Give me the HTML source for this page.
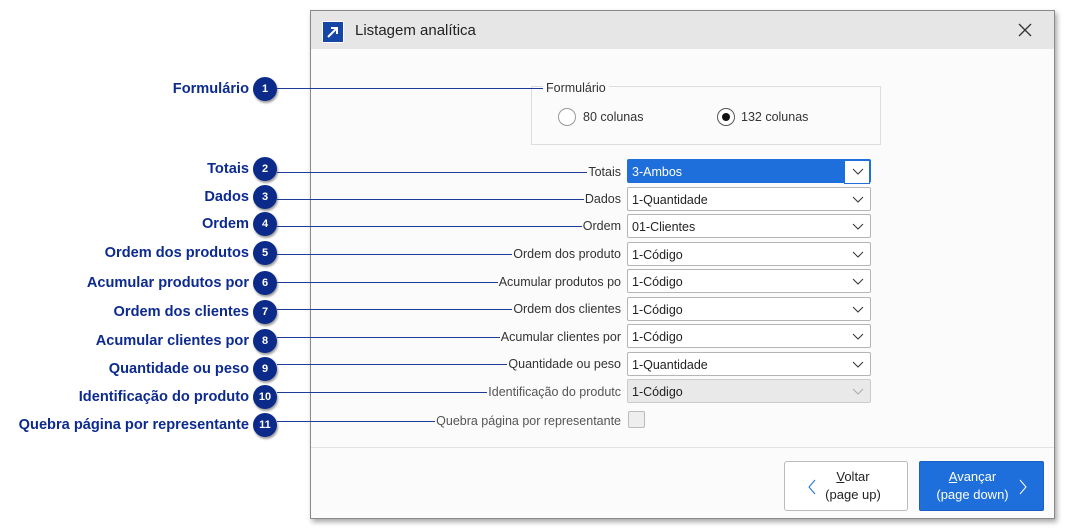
<!DOCTYPE html><html><head><meta charset="utf-8"><style>
body{margin:0;width:1068px;height:530px;background:#fff;position:relative;overflow:hidden;font-family:"Liberation Sans","DejaVu Sans",sans-serif}
.a{position:absolute}
.win{left:310px;top:10px;width:743px;height:507px;border:1px solid #8a8a8a;background:#fbfbfb;box-shadow:2px 3px 5px rgba(0,0,0,.35)}
.tb{left:0;top:0;width:743px;height:38px;background:#e6e6e6}
.lbl{font-weight:bold;color:#0d2b8f;font-size:14.6px;text-align:right;right:819px;line-height:16px;white-space:nowrap}
.c{width:24px;height:24px;border-radius:50%;background:#0b2a8a;color:#fff;font-size:11px;font-weight:bold;text-align:center;line-height:24px;left:253px;box-shadow:1px 2px 2px rgba(0,0,0,.4)}
.row{left:277px;width:344px;height:16px;display:flex;align-items:center;font-size:12.5px;color:#333}
.row i{flex:1;height:1px;background:#1d3c9a;margin-right:1px}
.cb{left:627px;width:244px;height:24px;border:1px solid #b5b5b5;border-radius:2px;background:#fff;font-size:12.5px;line-height:24px;padding-left:4px;box-sizing:border-box;color:#222}
.cb svg{position:absolute;right:6px;top:8px}
</style></head><body>
<div class="a win">
<div class="a tb"></div>
<div class="a" style="left:11px;top:10px;width:20px;height:20px;background:#1545a5;border:1px solid #fff"><svg width="20" height="20"><path d="M5 15L14 6M8 6h6v6" stroke="#fff" stroke-width="2" fill="none"/></svg></div>
<div class="a" style="left:44px;top:11px;font-size:15px;color:#222">Listagem analítica</div>
<svg class="a" style="left:707px;top:12px" width="14" height="14"><path d="M1 1L13 13M13 1L1 13" stroke="#333" stroke-width="1.3"/></svg>
<div class="a" style="left:220px;top:75px;width:348px;height:57px;border:1px solid #ddd"></div>
<div class="a" style="left:232px;top:70px;padding:0 3px;background:#fbfbfb;font-size:12.5px;color:#333">Formulário</div>
<div class="a" style="left:247px;top:97px;width:16px;height:16px;border:1px solid #999;border-radius:50%;background:#fff"></div>
<div class="a" style="left:272px;top:99px;font-size:12.5px;color:#333">80 colunas</div>
<div class="a" style="left:406px;top:97px;width:16px;height:16px;border:1px solid #555;border-radius:50%;background:#fff"><div class="a" style="left:4px;top:4px;width:8px;height:8px;border-radius:50%;background:#111"></div></div>
<div class="a" style="left:430px;top:99px;font-size:12.5px;color:#333">132 colunas</div>
<div class="a" style="left:0;top:436px;width:743px;height:1px;background:#e2e2e2"></div>
<div class="a" style="left:473px;top:450px;width:122px;height:48px;border:1px solid #bbb;border-radius:3px;background:#fff;color:#222;font-size:13px;text-align:center;line-height:18px"><div style="padding-top:6px;padding-left:14px"><u>V</u>oltar<br>(page up)</div><svg class="a" style="left:22px;top:17px" width="10" height="16"><path d="M8 1L2 8l6 7" stroke="#1a6fd6" fill="none"/></svg></div>
<div class="a" style="left:608px;top:450px;width:123px;height:48px;border:1px solid #1b5fc6;border-radius:2px;background:#1e6fdb;color:#fff;font-size:13px;text-align:center;line-height:18px"><div style="padding-top:6px;padding-right:18px"><u>A</u>vançar<br>(page down)</div><svg class="a" style="left:98px;top:17px" width="10" height="16"><path d="M2 1l6 7-6 7" stroke="#fff" fill="none"/></svg></div>
</div>
<div class="a lbl" style="top:81px">Formulário</div><div class="a c" style="top:77px">1</div>
<div class="a" style="left:277px;top:88px;width:266px;height:1px;background:#1d3c9a"></div>

<div class="a lbl" style="top:161px">Totais</div><div class="a c" style="top:157px">2</div>
<div class="a row" style="top:164px"><i></i>Totais</div>
<div class="a cb" style="top:159px;background:#1e6fdb;border-color:#1e6fdb;color:#fff">3-Ambos<div class="a" style="right:0;top:0;width:24px;height:22px;background:#fff;border:1px solid #1e6fdb"></div><svg width="12" height="8"><path d="M1 1l5 5 5-5" stroke="#333" fill="none"/></svg></div>

<div class="a lbl" style="top:189px">Dados</div><div class="a c" style="top:185px">3</div>
<div class="a row" style="top:191px"><i></i>Dados</div>
<div class="a cb" style="top:187px">1-Quantidade<svg width="12" height="8"><path d="M1 1l5 5 5-5" stroke="#333" fill="none"/></svg></div>

<div class="a lbl" style="top:216px">Ordem</div><div class="a c" style="top:212px">4</div>
<div class="a row" style="top:218px"><i></i>Ordem</div>
<div class="a cb" style="top:214px">01-Clientes<svg width="12" height="8"><path d="M1 1l5 5 5-5" stroke="#333" fill="none"/></svg></div>

<div class="a lbl" style="top:245px">Ordem dos produtos</div><div class="a c" style="top:241px">5</div>
<div class="a row" style="top:246px"><i></i>Ordem dos produto</div>
<div class="a cb" style="top:242px">1-Código<svg width="12" height="8"><path d="M1 1l5 5 5-5" stroke="#333" fill="none"/></svg></div>

<div class="a lbl" style="top:275px">Acumular produtos por</div><div class="a c" style="top:271px">6</div>
<div class="a row" style="top:274px"><i></i>Acumular produtos po</div>
<div class="a cb" style="top:269px">1-Código<svg width="12" height="8"><path d="M1 1l5 5 5-5" stroke="#333" fill="none"/></svg></div>

<div class="a lbl" style="top:304px">Ordem dos clientes</div><div class="a c" style="top:300px">7</div>
<div class="a row" style="top:301px"><i></i>Ordem dos clientes</div>
<div class="a cb" style="top:297px">1-Código<svg width="12" height="8"><path d="M1 1l5 5 5-5" stroke="#333" fill="none"/></svg></div>

<div class="a lbl" style="top:333px">Acumular clientes por</div><div class="a c" style="top:329px">8</div>
<div class="a row" style="top:329px"><i></i>Acumular clientes por</div>
<div class="a cb" style="top:324px">1-Código<svg width="12" height="8"><path d="M1 1l5 5 5-5" stroke="#333" fill="none"/></svg></div>

<div class="a lbl" style="top:361px">Quantidade ou peso</div><div class="a c" style="top:357px">9</div>
<div class="a row" style="top:356px"><i></i>Quantidade ou peso</div>
<div class="a cb" style="top:352px">1-Quantidade<svg width="12" height="8"><path d="M1 1l5 5 5-5" stroke="#333" fill="none"/></svg></div>

<div class="a lbl" style="top:389px">Identificação do produto</div><div class="a c" style="top:385px">10</div>
<div class="a row" style="top:384px;color:#555"><i></i>Identificação do produtc</div>
<div class="a cb" style="top:379px;background:#e9e9e9;border-color:#ccc">1-Código<svg width="12" height="8"><path d="M1 1l5 5 5-5" stroke="#aaa" fill="none"/></svg></div>

<div class="a lbl" style="top:417px">Quebra página por representante</div><div class="a c" style="top:413px">11</div>
<div class="a row" style="top:413px;color:#555"><i></i>Quebra página por representante</div>
<div class="a" style="left:628px;top:411px;width:15px;height:15px;border:1px solid #bbb;border-radius:2px;background:#eee"></div>
</body></html>
